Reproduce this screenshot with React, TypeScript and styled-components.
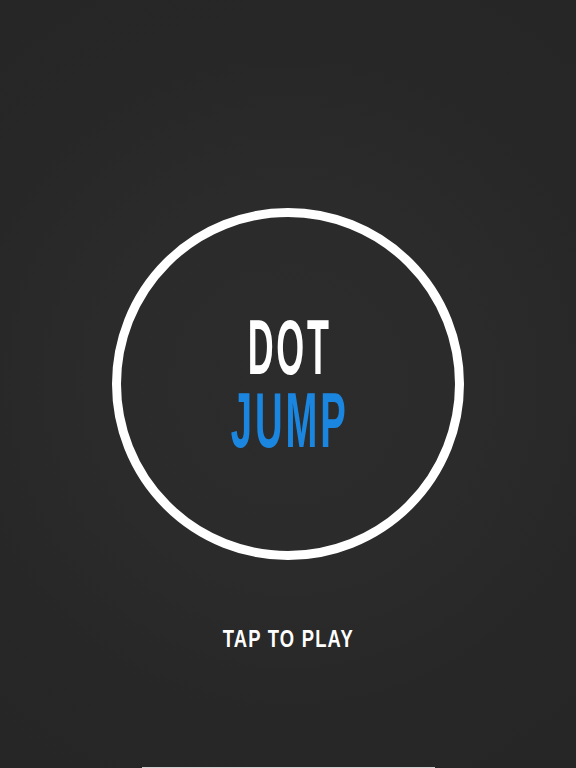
import React from "react";
import styled, { createGlobalStyle } from "styled-components";

const GlobalStyle = createGlobalStyle`
  html, body {
    margin: 0;
    padding: 0;
    background: #272727;
  }
  * {
    box-sizing: border-box;
  }
`;

const Screen = styled.div`
  width: 576px;
  height: 768px;
  display: flex;
  flex-direction: column;
  align-items: center;
  overflow: hidden;
  background: radial-gradient(circle at 50% 50%, #2c2c2c 0%, #2b2b2b 40%, #272727 70%, #262626 100%);
  font-family: "Liberation Sans", Arial, sans-serif;
`;

const Ring = styled.div`
  margin-top: 208px;
  width: 352px;
  height: 352px;
  border: 9px solid #ffffff;
  border-radius: 50%;
  display: flex;
  flex-direction: column;
  align-items: center;
  justify-content: center;
`;

// condensed title lettering: bold face squeezed horizontally, spaced out
const Word = styled.div<{ $color: string; $squeeze: number }>`
  color: ${(p) => p.$color};
  font-size: 78px;
  font-weight: 700;
  line-height: 73px;
  height: 73px;
  letter-spacing: 6px;
  padding-left: 6px;
  transform: scaleX(${(p) => p.$squeeze});
  white-space: nowrap;
`;

const Prompt = styled.div`
  margin-top: 66px;
  color: #ffffff;
  font-weight: 700;
  font-size: 23px;
  line-height: 26px;
  letter-spacing: 1.5px;
  padding-left: 1.5px;
  transform: scaleX(0.8);
  white-space: nowrap;
`;

const HomeBar = styled.div`
  margin-top: auto;
  width: 293px;
  height: 1px;
  background: #cfcfcf;
`;

export default function App() {
  return (
    <>
      <GlobalStyle />
      <Screen>
        <Ring>
          <Word $color="#ffffff" $squeeze={0.46}>DOT</Word>
          <Word $color="#1a86e0" $squeeze={0.49}>JUMP</Word>
        </Ring>
        <Prompt>TAP TO PLAY</Prompt>
        <HomeBar />
      </Screen>
    </>
  );
}
